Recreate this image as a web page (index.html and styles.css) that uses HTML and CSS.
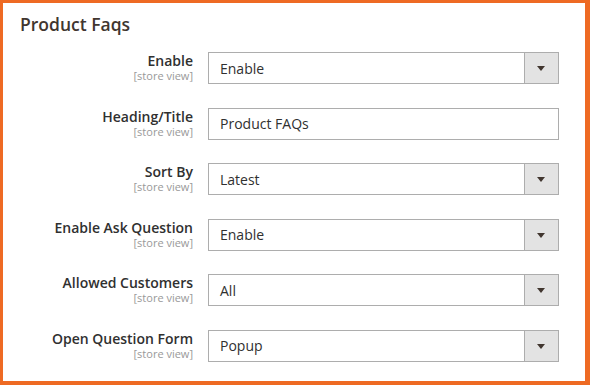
FILE: index.html
```html
<!DOCTYPE html>
<html lang="en">
<head>
    <meta charset="UTF-8">
    <title>Product Faqs</title>
    <link rel="stylesheet" href="styles.css">
</head>
<body>
    <div class="panel">
        <h2 class="title">Product Faqs</h2>
        <div class="fields">
            <div class="field">
                <div class="label">Enable<span class="scope">[store view]</span></div>
                <div class="control select"><span class="value">Enable</span><span class="arrow"></span></div>
            </div>
            <div class="field">
                <div class="label">Heading/Title<span class="scope">[store view]</span></div>
                <div class="control"><span class="value">Product FAQs</span></div>
            </div>
            <div class="field">
                <div class="label">Sort By<span class="scope">[store view]</span></div>
                <div class="control select"><span class="value">Latest</span><span class="arrow"></span></div>
            </div>
            <div class="field">
                <div class="label">Enable Ask Question<span class="scope">[store view]</span></div>
                <div class="control select"><span class="value">Enable</span><span class="arrow"></span></div>
            </div>
            <div class="field">
                <div class="label">Allowed Customers<span class="scope">[store view]</span></div>
                <div class="control select"><span class="value">All</span><span class="arrow"></span></div>
            </div>
            <div class="field">
                <div class="label">Open Question Form<span class="scope">[store view]</span></div>
                <div class="control select"><span class="value">Popup</span><span class="arrow"></span></div>
            </div>
        </div>
    </div>
</body>
</html>
```

FILE: styles.css
```css
body {
    margin: 0;
    font-family: "Open Sans", "Liberation Sans", sans-serif;
    background: #fff;
}
.panel {
    box-sizing: border-box;
    width: 590px;
    height: 385px;
    border: solid #ee6a23;
    border-width: 3px 5px 4px 3px;
    background: #fff;
}
.panel .title {
    margin: 0;
    padding: 10px 0 0 17px;
    font-size: 17.5px;
    font-weight: 600;
    line-height: 22px;
    color: #41362f;
}
.fields {
    display: flex;
    flex-direction: column;
    gap: 23.6px;
    margin-top: 17px;
}
.field {
    display: grid;
    grid-template-columns: 190px 351px;
    column-gap: 15px;
    align-items: start;
}
.field .label {
    display: flex;
    flex-direction: column;
    align-items: flex-end;
    padding-top: 1px;
    font-size: 14px;
    font-weight: 600;
    line-height: 16px;
    color: #303030;
}
.field .scope {
    font-size: 11px;
    font-weight: 400;
    line-height: 13px;
    color: #999;
}
.control {
    box-sizing: border-box;
    height: 32px;
    display: flex;
    align-items: center;
    border: 1px solid #adadad;
    background: #fff;
    font-size: 14px;
    color: #303030;
}
.control .value {
    flex: 1;
    padding-left: 11px;
}
.control .arrow {
    align-self: stretch;
    width: 33px;
    border-left: 1px solid #adadad;
    background: #e3e3e3;
    position: relative;
}
.control .arrow::after {
    content: "";
    position: absolute;
    left: 12px;
    top: 13px;
    border-style: solid;
    border-width: 5px 4px 0 4px;
    border-color: #41362f transparent transparent transparent;
}
```
